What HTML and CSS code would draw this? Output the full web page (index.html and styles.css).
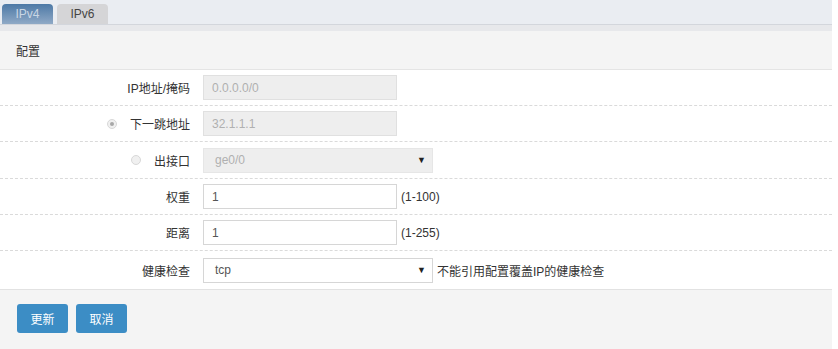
FILE: index.html
```html
<!DOCTYPE html>
<html>
<head>
<meta charset="utf-8">
<link rel="stylesheet" href="styles.css">
</head>
<body>
<div class="page">
  <div class="tabbar">
    <div class="tab active">IPv4</div>
    <div class="tab">IPv6</div>
  </div>
  <div class="band"></div>
  <div class="header">配置</div>
  <div class="form">
    <div class="row">
      <div class="label">IP地址/掩码</div>
      <div class="field"><div class="input disabled">0.0.0.0/0</div></div>
    </div>
    <div class="row">
      <div class="label"><span class="radio checked"></span>下一跳地址</div>
      <div class="field"><div class="input disabled">32.1.1.1</div></div>
    </div>
    <div class="row tall">
      <div class="label"><span class="radio"></span>出接口</div>
      <div class="field"><div class="select disabled"><span>ge0/0</span><span class="arrow">▼</span></div></div>
    </div>
    <div class="row">
      <div class="label">权重</div>
      <div class="field"><div class="input">1</div><span class="hint">(1-100)</span></div>
    </div>
    <div class="row">
      <div class="label">距离</div>
      <div class="field"><div class="input">1</div><span class="hint">(1-255)</span></div>
    </div>
    <div class="row last">
      <div class="label">健康检查</div>
      <div class="field"><div class="select"><span>tcp</span><span class="arrow">▼</span></div><span class="hint2">不能引用配置覆盖IP的健康检查</span></div>
    </div>
  </div>
  <div class="footer">
    <button class="btn">更新</button>
    <button class="btn">取消</button>
  </div>
</div>
</body>
</html>
```

FILE: styles.css
```css
html, body {
  margin: 0;
  padding: 0;
  background: #ffffff;
}
body {
  font-family: "Liberation Sans", Arial, "Noto Sans CJK SC", sans-serif;
  font-size: 12px;
  color: #333333;
}
.page {
  width: 832px;
  height: 349px;
  display: flex;
  flex-direction: column;
}
.tabbar {
  background: #eaedf2;
  border-bottom: 1px solid #d3d6dc;
  display: flex;
  align-items: flex-end;
  padding-left: 2px;
  gap: 4px;
  box-sizing: border-box;
  height: 25px;
}
.tab {
  width: 51px;
  height: 20px;
  border-radius: 4px 4px 0 0;
  background: #d5d5d7;
  color: #444444;
  display: flex;
  align-items: center;
  justify-content: center;
  font-size: 12px;
}
.tab.active {
  background: linear-gradient(to bottom, #4d79a6, #8fa9c6);
  color: #c9d6e4;
}
.band {
  height: 6px;
  background: #e7e8eb;
}
.header {
  height: 38px;
  background: #f4f4f4;
  border-bottom: 1px solid #e4e4e4;
  display: flex;
  align-items: center;
  padding-left: 16px;
  font-size: 12px;
  color: #333;
}
.form {
  display: flex;
  flex-direction: column;
}
.row {
  height: 35px;
  display: flex;
  align-items: center;
  border-bottom: 1px dashed #dadada;
}
.row.tall {
  height: 36px;
}
.row.last {
  border-bottom: 1px solid #e2e2e2;
  height: 38px;
}
.label {
  width: 190px;
  flex: none;
  display: flex;
  justify-content: flex-end;
  align-items: center;
  color: #333;
}
.radio {
  width: 10px;
  height: 10px;
  border-radius: 50%;
  border: 1px solid #d8d8d8;
  background: #f0f0f0;
  margin-right: 13px;
  position: relative;
  box-sizing: border-box;
}
.radio.checked::after {
  content: "";
  position: absolute;
  left: 2px;
  top: 2px;
  width: 4px;
  height: 4px;
  border-radius: 50%;
  background: #a8a8a8;
}
.field {
  display: flex;
  align-items: center;
  margin-left: 13px;
}
.input {
  width: 194px;
  height: 25px;
  box-sizing: border-box;
  border: 1px solid #d6d6d6;
  background: #ffffff;
  padding-left: 8px;
  display: flex;
  align-items: center;
  color: #555555;
}
.input.disabled {
  background: #eeeeee;
  color: #b0b0b0;
  border-color: #e0e0e0;
}
.select {
  width: 230px;
  height: 25px;
  box-sizing: border-box;
  border: 1px solid #d6d6d6;
  background: #ffffff;
  padding-left: 11px;
  padding-right: 6px;
  display: flex;
  align-items: center;
  justify-content: space-between;
  color: #555555;
}
.select.disabled {
  background: #eeeeee;
  color: #b0b0b0;
  border-color: #e6e6e6;
}
.arrow {
  font-size: 9px;
  color: #222222;
}
.hint {
  margin-left: 4px;
  color: #333;
}
.hint2 {
  margin-left: 4px;
  color: #333;
}
.footer {
  flex: 1;
  background: #f4f4f4;
  display: flex;
  align-items: flex-start;
  padding: 14px 0 0 17px;
  gap: 8px;
}
.btn {
  width: 51px;
  height: 29px;
  border: none;
  border-radius: 3px;
  background: #3c8dc5;
  color: #ffffff;
  font-family: "Liberation Sans", Arial, "Noto Sans CJK SC", sans-serif;
  font-size: 12px;
  padding: 0;
}
```
